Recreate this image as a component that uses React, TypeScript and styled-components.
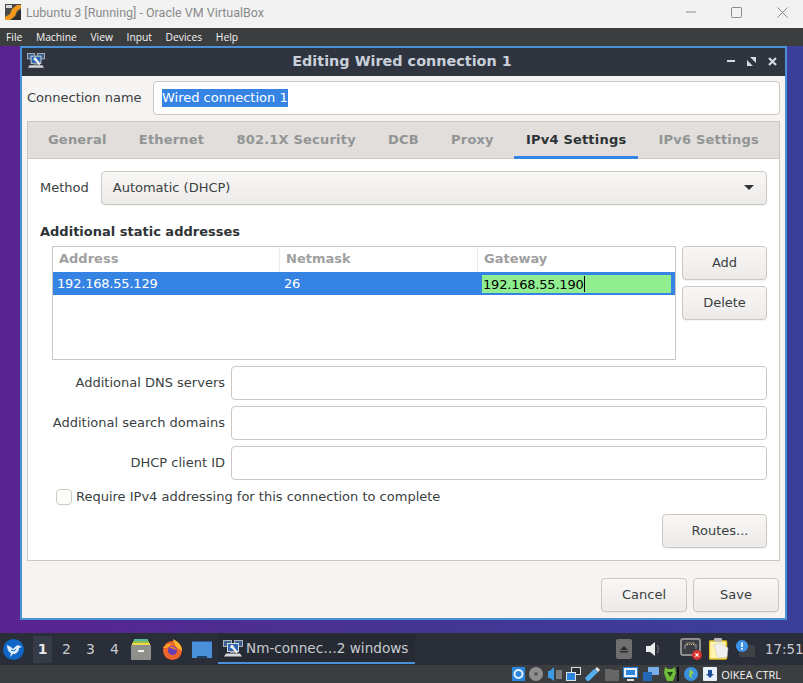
import React from 'react';
import styled, { createGlobalStyle } from 'styled-components';

const GlobalStyle = createGlobalStyle`
  html, body {
    margin: 0;
    padding: 0;
    background: #3c3d3e;
  }
  * {
    box-sizing: border-box;
  }
`;

const tabs = ['General', 'Ethernet', '802.1X Security', 'DCB', 'Proxy', 'IPv4 Settings', 'IPv6 Settings'];
const menus = ['File', 'Machine', 'View', 'Input', 'Devices', 'Help'];
const fields = ['Additional DNS servers', 'Additional search domains', 'DHCP client ID'];

// two monitors and a wrench, used by the dialog title and the task button
const NetIcon = ({ size = 20 }: { size?: number }) => (
  <svg width={size} height={size * 0.85} viewBox="0 0 20 17">
    <rect x="0.5" y="0.5" width="8" height="6" fill="#3b5f8f" stroke="#aeb4ba" />
    <rect x="11.5" y="0.5" width="8" height="6" fill="#3b5f8f" stroke="#aeb4ba" />
    <rect x="4.5" y="3.5" width="11" height="8" fill="#2c66b0" stroke="#d5d9dd" />
    <path d="M7 11.5h6v1.5H7z" fill="#8f959b" />
    <path d="M3 13.5h14l2 3H1z" fill="#d5d8da" />
    <path d="M8 5l2 0 1 2 4 5-1.5 1.5-4.5-5-2-1z" fill="#f0f0f0" />
  </svg>
);

const App = () => {
  return (
    <Screen>
      <GlobalStyle />
      <HostTitle>
        <svg width="16" height="16" viewBox="0 0 16 16">
          <rect width="16" height="16" fill="#4a4a4a" />
          <path d="M0 16v-3l5-3 2-5 5-4h4v3l-4 3-2 5-5 4z" fill="#f39a1c" />
          <path d="M6 16l5-4 1-3 4-3v10z" fill="#2e2e2e" />
          <rect x="1" y="1" width="6" height="3" fill="#d8d8d8" />
        </svg>
        <HostTitleText>Lubuntu 3 [Running] - Oracle VM VirtualBox</HostTitleText>
        <HostControls>
          <svg width="10" height="2" viewBox="0 0 10 2"><path d="M0 1h10" stroke="#8a8a8a" /></svg>
          <svg width="11" height="11" viewBox="0 0 11 11"><rect x="0.5" y="0.5" width="10" height="10" rx="1" fill="none" stroke="#8a8a8a" /></svg>
          <svg width="11" height="11" viewBox="0 0 11 11"><path d="M0.5 0.5l10 10M10.5 0.5l-10 10" stroke="#8a8a8a" /></svg>
        </HostControls>
      </HostTitle>
      <MenuBar>
        {menus.map((m) => (
          <MenuItem key={m}>{m}</MenuItem>
        ))}
      </MenuBar>

      <Desktop>
        <Window>
          <WindowTitle>
            <NetIcon size={18} />
            <WindowTitleText>Editing Wired connection 1</WindowTitleText>
            <WindowButtons>
              <svg width="8" height="2" viewBox="0 0 8 2"><rect width="8" height="2" fill="#d3dae3" /></svg>
              <svg width="9" height="9" viewBox="0 0 9 9"><path d="M9 0v6L3 0zM0 9V3l6 6z" fill="#d3dae3" /></svg>
              <svg width="9" height="9" viewBox="0 0 9 9"><path d="M1 1l7 7M8 1L1 8" stroke="#d3dae3" strokeWidth="2.2" /></svg>
            </WindowButtons>
          </WindowTitle>

          <DialogBody>
            <NameRow>
              <NameLabel>Connection name</NameLabel>
              <TextBox>
                <Selected>Wired connection 1</Selected>
              </TextBox>
            </NameRow>

            <Notebook>
              <TabBar>
                {tabs.map((t) => (
                  <Tab key={t} $active={t === 'IPv4 Settings'}>
                    {t}
                  </Tab>
                ))}
              </TabBar>
              <Page>
                <MethodRow>
                  <span>Method</span>
                  <Combo>
                    Automatic (DHCP)
                    <svg width="10" height="5" viewBox="0 0 10 5"><path d="M0 0h10L5 5z" fill="#2e3436" /></svg>
                  </Combo>
                </MethodRow>
                <SectionTitle>Additional static addresses</SectionTitle>
                <AddressRow>
                  <Table>
                    <TableHead>
                      <HeadCell $width={227}>Address</HeadCell>
                      <HeadCell $width={198}>Netmask</HeadCell>
                      <HeadCell $width={197}>Gateway</HeadCell>
                    </TableHead>
                    <SelectedRow>
                      <RowCell $width={227}>192.168.55.129</RowCell>
                      <RowCell $width={198}>26</RowCell>
                      <EditCell>
                        192.168.55.190
                        <Caret />
                      </EditCell>
                    </SelectedRow>
                  </Table>
                  <SideButtons>
                    <Button $width={85}>Add</Button>
                    <Button $width={85}>Delete</Button>
                  </SideButtons>
                </AddressRow>
                <Fields>
                  {fields.map((f) => (
                    <FieldRow key={f}>
                      <FieldLabel>{f}</FieldLabel>
                      <FieldInput />
                    </FieldRow>
                  ))}
                </Fields>
                <CheckRow>
                  <CheckBox />
                  <CheckLabel>Require IPv4 addressing for this connection to complete</CheckLabel>
                </CheckRow>
                <RoutesRow>
                  <RoutesButton $width={105}>Routes...</RoutesButton>
                </RoutesRow>
              </Page>
            </Notebook>

            <DialogActions>
              <Button $width={86}>Cancel</Button>
              <Button $width={86}>Save</Button>
            </DialogActions>
          </DialogBody>
        </Window>
      </Desktop>

      <Panel>
        <svg width="21" height="21" viewBox="0 0 21 21">
          <circle cx="10.5" cy="10.5" r="10.5" fill="#0f66c4" />
          <path d="M4 6l4 2 2 2 3-3c1-1 3-1 4 0l2 1-3 1c0 4-3 6-6 6l-3 3 1-4C5 13 4 9 4 6z" fill="#dcebf8" />
          <path d="M8 11l3 1 2-2" fill="none" stroke="#0f66c4" />
        </svg>
        <Pager>
          <PagerItem $active>1</PagerItem>
          <PagerItem>2</PagerItem>
          <PagerItem>3</PagerItem>
          <PagerItem>4</PagerItem>
        </Pager>
        <Launchers>
          <svg width="20" height="21" viewBox="0 0 20 21">
            <rect x="3" y="0" width="14" height="2" fill="#5db6a0" />
            <rect x="2" y="2" width="16" height="2" fill="#8cc152" />
            <rect x="1" y="4" width="18" height="2" fill="#f2d649" />
            <rect x="0" y="6" width="20" height="15" rx="1" fill="#8f8f8b" />
            <rect x="7" y="11" width="6" height="2" fill="#f2f2f2" />
          </svg>
          <svg width="21" height="21" viewBox="0 0 21 21">
            <circle cx="10.5" cy="11.5" r="9.5" fill="#f0642a" />
            <path d="M11 0c6 3 9 7 9 12l-6-4c-1-3-3-5-3-8z" fill="#ffb52e" />
            <path d="M1 9c2-3 6-5 9-4L5 9z" fill="#f9a02a" />
            <circle cx="10.5" cy="11.5" r="4.5" fill="#6a3fb5" />
            <path d="M7 8c3-1 6 0 8 3l-4-1z" fill="#f58a2a" />
          </svg>
          <FolderIcon width="20" height="17" viewBox="0 0 20 17">
            <rect width="20" height="17" fill="#4a90d9" />
            <rect width="20" height="1" fill="#2a5c94" />
            <rect x="5" y="15" width="10" height="2" fill="#1d3f68" />
          </FolderIcon>
        </Launchers>
        <TaskButton>
          <NetIcon size={20} />
          Nm-connec…2 windows
        </TaskButton>
        <Tray>
          <TraySlot $gap={0}>
            <svg width="16" height="20" viewBox="0 0 16 20">
              <rect width="16" height="20" rx="2" fill="#6f6f6f" />
              <path d="M8 7l4 4H4zM4 12h8v1.5H4z" fill="#2a2d36" />
            </svg>
          </TraySlot>
          <TraySlot $gap={14}>
            <svg width="15" height="14" viewBox="0 0 15 14">
              <path d="M0 4h4l5-4v14l-5-4H0z" fill="#ececec" />
              <path d="M11 3c2 2 2 6 0 8" fill="none" stroke="#666" strokeWidth="1.5" />
            </svg>
          </TraySlot>
          <TraySlot $gap={19}>
            <svg width="22" height="22" viewBox="0 0 22 22">
              <path d="M1 3a2 2 0 012-2h15a2 2 0 012 2v12a2 2 0 01-2 2H3a2 2 0 01-2-2z" fill="#3a3d44" stroke="#8f8f8f" strokeWidth="2" />
              <path d="M5 11V7h2V5h7v2h2v4" fill="none" stroke="#8f8f8f" strokeWidth="1.2" />
              <path d="M7 6.5h7" stroke="#e0b94f" strokeDasharray="1 1" />
              <circle cx="17" cy="17" r="5" fill="#d9322e" />
              <path d="M15.3 15.3l3.4 3.4M18.7 15.3l-3.4 3.4" stroke="#fff" strokeWidth="1.2" />
            </svg>
          </TraySlot>
          <TraySlot $gap={7}>
            <svg width="20" height="22" viewBox="0 0 20 22">
              <rect x="0.5" y="3" width="17" height="18" rx="1" fill="#fff3b0" stroke="#e8c11f" strokeWidth="1.5" />
              <rect x="5" y="0" width="8" height="4" rx="1" fill="#b9b9b9" />
              <path d="M5 7l6-2 8 5-1 9-9 1z" fill="#efefef" stroke="#c4c4c4" strokeWidth="0.5" />
            </svg>
          </TraySlot>
          <TraySlot $gap={7}>
            <svg width="19" height="19" viewBox="0 0 19 19">
              <rect x="3" y="5" width="16" height="12" fill="#3f4147" />
              <circle cx="6" cy="6" r="6" fill="#3d92ea" />
              <rect x="5.2" y="2.5" width="1.7" height="4.5" fill="#fff" />
              <rect x="5.2" y="8" width="1.7" height="1.7" fill="#fff" />
            </svg>
          </TraySlot>
          <Clock>17:51</Clock>
        </Tray>
      </Panel>

      <StatusBar>
        <svg width="13" height="14" viewBox="0 0 13 14">
          <rect width="13" height="14" fill="#2b85dc" />
          <circle cx="6.5" cy="7" r="4" fill="none" stroke="#e6f0fa" strokeWidth="2" />
        </svg>
        <svg width="14" height="14" viewBox="0 0 14 14">
          <circle cx="7" cy="7" r="7" fill="#8e8e8e" />
          <circle cx="7" cy="7" r="2" fill="#5f5f5f" />
        </svg>
        <svg width="14" height="14" viewBox="0 0 14 14">
          <path d="M0 4h2l4-4v14l-4-3H0z" fill="#3a9be8" />
          <rect x="8" y="3" width="6" height="9" fill="#7d7d7d" />
        </svg>
        <svg width="15" height="14" viewBox="0 0 15 14">
          <rect x="5.5" y="0.5" width="9" height="7" fill="#2c2f36" stroke="#dfe2e5" />
          <rect x="0.5" y="5.5" width="9" height="8" fill="#2b85dc" stroke="#dfe2e5" />
        </svg>
        <svg width="15" height="14" viewBox="0 0 15 14">
          <path d="M0 11L9 2l4 3-9 9H2z" fill="#55aef0" />
          <path d="M10 2l2-2 3 3-2 2z" fill="#e8e8e8" />
        </svg>
        <svg width="14" height="14" viewBox="0 0 14 14">
          <path d="M0 2h6l1 1h7v11H0z" fill="#666" />
        </svg>
        <svg width="15" height="14" viewBox="0 0 15 14">
          <rect x="0.5" y="0.5" width="14" height="10" fill="#eaf3fb" stroke="#2b85dc" />
          <rect x="3" y="3" width="9" height="5" fill="#2b85dc" />
          <rect x="4" y="12" width="7" height="2" fill="#ddd" />
        </svg>
        <svg width="16" height="14" viewBox="0 0 16 14">
          <rect x="5" y="0" width="11" height="8" fill="#7ab0ea" />
          <rect x="0" y="5" width="9" height="9" fill="#2368b5" />
        </svg>
        <svg width="17" height="14" viewBox="0 0 17 14">
          <path d="M2 0l3 2h4l3-2 1 6-3 8H4L1 6z" fill="#6fbf3a" />
          <path d="M4 5h6l-3 5z" fill="#1c4a12" />
          <rect x="14" y="0" width="2" height="14" fill="#111" />
        </svg>
        <svg width="14" height="14" viewBox="0 0 14 14">
          <circle cx="7" cy="7" r="7" fill="#3a8fe0" />
          <path d="M6 2l4 4-3 2 2 4-4-3z" fill="#8fd14f" />
        </svg>
        <svg width="14" height="14" viewBox="0 0 14 14">
          <rect width="14" height="14" rx="1" fill="#e8f1fa" />
          <path d="M5 3h4v4h2l-4 4-4-4h2z" fill="#1d4f9c" />
        </svg>
        <HostKey>OIKEA CTRL</HostKey>
      </StatusBar>
    </Screen>
  );
};

const Screen = styled.div`
  width: 803px;
  height: 683px;
  display: flex;
  flex-direction: column;
  overflow: hidden;
  font-family: 'DejaVu Sans', sans-serif;
  font-size: 13px;
  color: #3a3f41;
`;

const HostTitle = styled.div`
  height: 28px;
  flex: none;
  display: flex;
  align-items: center;
  padding: 0 0 4px 5px;
  background: #f2f2f2;
`;

const HostTitleText = styled.span`
  margin-left: 5px;
  font-family: Roboto, sans-serif;
  font-size: 12.5px;
  color: #8a8a8a;
`;

const HostControls = styled.div`
  margin-left: auto;
  margin-right: 15px;
  display: flex;
  align-items: center;
  gap: 35px;
`;

const MenuBar = styled.div`
  height: 18px;
  flex: none;
  display: flex;
  align-items: center;
  padding-left: 6px;
  gap: 13.6px;
  background: #3c3d3e;
`;

const MenuItem = styled.span`
  font-family: 'Open Sans', sans-serif;
  font-size: 10.3px;
  color: #f4f4f4;
`;

const Desktop = styled.div`
  flex: 1;
  padding: 0 16px 13px 20px;
  background: linear-gradient(90deg, #5a2390 0%, #453593 50%, #3a3f9a 100%);
`;

const Window = styled.div`
  height: 574px;
  display: flex;
  flex-direction: column;
  border: 2px solid #4a90d9;
`;

const WindowTitle = styled.div`
  height: 28px;
  flex: none;
  display: grid;
  grid-template-columns: 1fr auto 1fr;
  align-items: center;
  padding: 0 8px 2px 5px;
  background: #2f343f;
`;

const WindowTitleText = styled.div`
  font-weight: bold;
  font-size: 14.4px;
  color: #c8d0da;
`;

const WindowButtons = styled.div`
  justify-self: end;
  display: flex;
  align-items: center;
  gap: 12px;
`;

const DialogBody = styled.div`
  flex: 1;
  display: flex;
  flex-direction: column;
  padding: 5px 5px 6px 5px;
  background: #f5f4f2;
`;

const NameRow = styled.div`
  display: flex;
  align-items: center;
  height: 34px;
  flex: none;
`;

const NameLabel = styled.span`
  width: 126px;
  flex: none;
  padding-bottom: 2px;
`;

const TextBox = styled.div`
  flex: 1;
  height: 34px;
  padding: 0 8px;
  display: flex;
  align-items: center;
  background: #fff;
  border: 1px solid #cdc7c2;
  border-radius: 4px;
`;

const Selected = styled.span`
  background: #3584e4;
  color: #fff;
  line-height: 18px;
`;

const Notebook = styled.div`
  margin-top: 6px;
  height: 440px;
  flex: none;
  display: flex;
  flex-direction: column;
  border: 1px solid #cdc7c2;
`;

const TabBar = styled.div`
  height: 37px;
  flex: none;
  display: flex;
  padding-left: 8px;
  background: #e1dedb;
  border-bottom: 1px solid #cdc7c2;
`;

const Tab = styled.div<{ $active?: boolean }>`
  height: 37px;
  flex: none;
  padding: 0 12px;
  margin-right: 8.2px;
  display: flex;
  align-items: center;
  white-space: nowrap;
  font-weight: bold;
  letter-spacing: 0.2px;
  color: ${(p) => (p.$active ? '#2e3436' : '#929595')};
  border-bottom: 3px solid ${(p) => (p.$active ? '#3584e4' : 'transparent')};
`;

const Page = styled.div`
  flex: 1;
  display: flex;
  flex-direction: column;
  padding: 12px;
  background: #fff;
`;

const MethodRow = styled.div`
  display: flex;
  align-items: center;
  gap: 12px;
  height: 34px;
  flex: none;
  & > span {
    padding-bottom: 2px;
  }
`;

const Combo = styled.div`
  flex: 1;
  height: 34px;
  display: flex;
  align-items: center;
  justify-content: space-between;
  padding: 0 12px 2px 11px;
  border: 1px solid #cdc7c2;
  border-radius: 4px;
  background: linear-gradient(#f8f7f6, #ecebe9);
  box-shadow: 0 1px 1px rgba(0, 0, 0, 0.05);
`;

const SectionTitle = styled.div`
  margin-top: 19px;
  height: 16px;
  line-height: 16px;
  font-weight: bold;
  color: #2e3436;
`;

const AddressRow = styled.div`
  margin-top: 6px;
  margin-left: 12px;
  display: flex;
  gap: 6px;
`;

const Table = styled.div`
  width: 624px;
  height: 114px;
  border: 1px solid #cdc7c2;
  background: #fff;
`;

const TableHead = styled.div`
  height: 25px;
  display: flex;
`;

const HeadCell = styled.div<{ $width: number }>`
  width: ${(p) => p.$width}px;
  padding: 0 0 2px 6px;
  display: flex;
  align-items: center;
  font-weight: bold;
  color: #a0a0a0;
  border-right: 1px solid #eeecea;
  &:last-child {
    border-right: none;
  }
`;

const SelectedRow = styled.div`
  height: 23px;
  display: flex;
  align-items: center;
  letter-spacing: -0.2px;
  background: #3584e4;
  color: #fff;
`;

const RowCell = styled.div<{ $width: number }>`
  width: ${(p) => p.$width}px;
  padding-left: 4px;
`;

const EditCell = styled.div`
  width: 189px;
  height: 18px;
  margin: 3px 0 2px 4px;
  padding-left: 1px;
  display: flex;
  align-items: center;
  background: #90ee90;
  color: #000;
`;

const Caret = styled.span`
  width: 1px;
  height: 16px;
  background: #000;
`;

const SideButtons = styled.div`
  display: flex;
  flex-direction: column;
  gap: 6px;
`;

const Button = styled.div<{ $width: number }>`
  width: ${(p) => p.$width}px;
  height: 34px;
  display: flex;
  align-items: center;
  justify-content: center;
  padding-bottom: 2px;
  border: 1px solid #cdc7c2;
  border-radius: 4px;
  background: linear-gradient(#f8f7f6, #ecebe9);
  box-shadow: 0 1px 1px rgba(0, 0, 0, 0.05);
`;

const RoutesButton = styled(Button)`
  padding-left: 11px;
`;

const Fields = styled.div`
  margin-top: 6px;
  display: flex;
  flex-direction: column;
  gap: 6px;
`;

const FieldRow = styled.div`
  display: flex;
  align-items: center;
  gap: 6px;
`;

const FieldLabel = styled.span`
  width: 185px;
  flex: none;
  padding-bottom: 2px;
  text-align: right;
`;

const FieldInput = styled.div`
  flex: 1;
  height: 34px;
  background: #fff;
  border: 1px solid #cdc7c2;
  border-radius: 4px;
`;

const CheckRow = styled.div`
  margin-top: 9px;
  margin-left: 16px;
  height: 16px;
  display: flex;
  align-items: center;
  gap: 4px;
`;

const CheckBox = styled.span`
  width: 16px;
  height: 16px;
  border: 1px solid #cdc7c2;
  border-radius: 4px;
  background: #fdfdfc;
`;

const CheckLabel = styled.span`
  padding-bottom: 2px;
`;

const RoutesRow = styled.div`
  margin-top: 9px;
  display: flex;
  justify-content: flex-end;
`;

const DialogActions = styled.div`
  margin-top: 17px;
  padding-right: 1px;
  display: flex;
  justify-content: flex-end;
  gap: 6px;
`;

const Panel = styled.div`
  height: 32px;
  flex: none;
  display: flex;
  align-items: center;
  padding-left: 3px;
  background: #2a2e38;
`;

const Pager = styled.div`
  margin-left: 9px;
  display: flex;
`;

const PagerItem = styled.div<{ $active?: boolean }>`
  width: 19px;
  height: 27px;
  margin-right: 5px;
  display: flex;
  align-items: center;
  justify-content: center;
  font-size: 14px;
  font-weight: ${(p) => (p.$active ? 'bold' : 'normal')};
  color: ${(p) => (p.$active ? '#e8e8e8' : '#c8ccd0')};
  background: ${(p) => (p.$active ? '#363b48' : 'transparent')};
`;

const Launchers = styled.div`
  margin-left: 2px;
  display: flex;
  align-items: center;
  gap: 11px;
`;

const FolderIcon = styled.svg`
  margin-left: -2px;
`;

const TaskButton = styled.div`
  width: 197px;
  height: 30px;
  margin-left: 6px;
  display: flex;
  align-items: center;
  gap: 3px;
  padding-left: 5px;
  font-size: 13.6px;
  color: #c8ccd0;
  background: #262a33;
  border-bottom: 2px solid #4a90d9;
`;

const Tray = styled.div`
  margin-left: auto;
  display: flex;
  align-items: center;
`;

const TraySlot = styled.span<{ $gap: number }>`
  display: flex;
  margin-left: ${(p) => p.$gap}px;
`;

const Clock = styled.span`
  width: 38px;
  margin-left: 10px;
  font-size: 13.4px;
  color: #c8ccd0;
`;

const StatusBar = styled.div`
  height: 18px;
  flex: none;
  display: flex;
  align-items: center;
  justify-content: flex-end;
  gap: 4.4px;
  padding-right: 22px;
  background: #3c3d3e;
`;

const HostKey = styled.span`
  font-family: 'Open Sans', sans-serif;
  font-size: 11px;
  color: #f4f4f4;
`;

export default App;
